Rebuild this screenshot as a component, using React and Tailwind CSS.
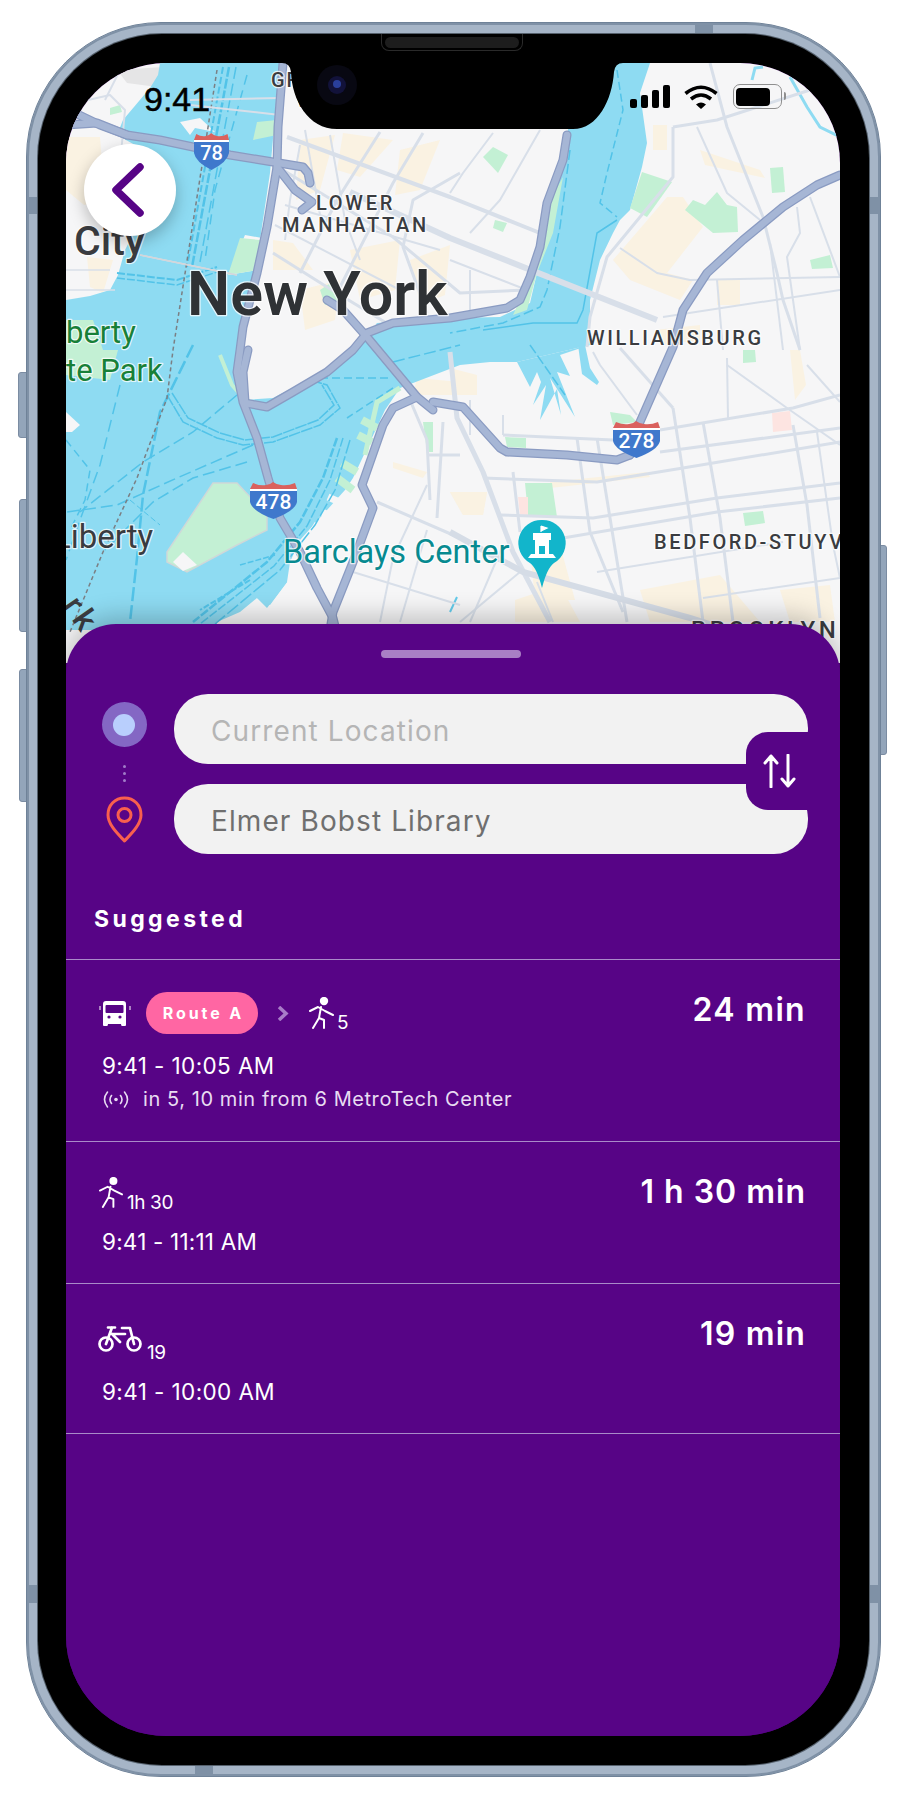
import React from "react";

// map data, in page pixels (the svg viewBox starts at the screen's top-left)
const TAN = [
  "66,137 100,137 105,200 84,205 66,190", "87,257 113,260 103,293 90,287",
  "343,133 393,140 360,177 337,170", "273,240 293,243 313,270 273,270", "437,203 460,197 460,233 440,240",
  "463,140 487,140 483,167 467,160", "507,140 527,133 520,153 510,153", "653,125 667,125 667,150 653,150",
  "613,260 650,217 667,197 683,197 703,227 667,273 693,280 680,300 630,280", "717,280 740,280 740,305 717,305",
  "267,368 293,348 307,365 277,382", "417,378 460,382 460,395 413,395", "450,368 477,375 477,395 460,395",
  "393,462 427,472 423,478 393,468", "450,492 487,492 483,515 463,515", "550,482 647,472 650,477 550,488",
  "700,150 760,170 765,178 705,165", "350,250 400,240 395,290 360,300", "300,290 340,280 335,320 305,330",
  "655,330 700,325 700,340 660,345", "515,600 560,585 580,622 515,622", "640,590 720,575 760,622 650,622",
  "780,590 830,585 835,622 790,622", "790,350 800,350 806,385 795,400", "300,140 335,135 320,190 296,200",
  "410,260 450,245 445,295 420,305", "400,150 440,140 420,190 395,195", "530,550 560,545 575,600 535,600",
];
const GREEN = [
  "257,122 277,120 277,135 253,140", "240,238 260,240 257,270 228,275", "483,157 493,147 508,155 498,173",
  "495,220 507,223 503,232 493,228", "630,208 642,172 672,182 647,217",
  "685,210 693,200 705,205 717,192 727,205 737,207 738,232 713,233", "770,168 783,167 785,192 772,193",
  "810,260 830,255 833,268 812,269", "550,200 563,177 553,233 537,273 527,310 513,315 520,300 535,270",
  "610,412 630,415 637,422 613,425", "743,350 755,350 756,362 743,363", "505,437 526,438 526,448 507,447",
  "525,483 552,483 557,517 528,515", "743,513 763,511 765,523 745,526", "423,422 433,422 433,452 427,452",
  "66,320 93,320 103,350 66,350", "110,108 120,105 122,112 110,115", "66,350 118,350 110,380 66,375",
  "320,290 335,280 345,300 325,305",
];
const MINOR = [
  ["287,137 450,197 540,233", 4], ["350,192 450,238 657,320", 6], ["283,170 393,237 460,293 527,290", 3],
  ["423,133 393,183 337,293", 3], ["380,132 337,200 300,273", 3], ["460,173 413,200 403,247 427,313", 3],
  ["273,253 327,287 393,327", 3], ["450,260 527,290", 2], ["470,270 470,310", 2], ["540,130 500,200 470,233", 2],
  ["493,133 463,173 450,193", 2], ["673,127 717,120 810,90", 3], ["673,127 673,177 607,257 590,317 587,347", 3],
  ["710,63 727,127 763,217 777,273 783,300 800,350", 3], ["697,127 727,193 760,220", 2],
  ["620,248 657,273 690,280 840,277", 2], ["797,207 800,233 787,257 800,350", 2], ["663,317 840,290", 2],
  ["770,243 783,350", 2], ["810,197 840,277", 2], ["717,280 723,350", 2], ["300,145 290,200 285,240", 2],
  ["330,135 345,220 360,260", 2], ["285,205 440,250", 2], ["275,225 400,290", 2], ["305,130 320,215", 2],
  ["503,435 613,440", 3], ["483,478 597,482 683,468 840,442", 3], ["660,430 793,408 840,395", 3], ["660,452 840,428", 3],
  ["500,515 593,518 717,498 840,483", 3], ["563,538 717,512 840,498", 3], ["597,572 783,542", 2], ["703,598 840,578", 2],
  ["577,438 590,532 623,612", 3], ["597,438 610,518 627,622", 3], ["673,408 690,518 703,622", 3],
  ["703,422 720,518 733,622", 3], ["793,425 807,505 820,618", 3], ["817,432 833,545 840,578", 2], ["620,348 673,408", 3],
  ["727,365 787,408 840,445", 2], ["727,358 728,418", 2], ["593,352 600,365 637,415", 2], ["807,365 840,402", 2],
  ["450,352 457,418 483,472 513,552 550,622", 5], ["513,472 520,532", 3], ["503,545 470,622", 2], ["537,582 553,622", 2],
  ["377,502 460,538", 3], ["353,572 460,605", 2], ["443,422 437,518", 3], ["427,455 460,455", 3], ["427,485 393,558 380,622", 2],
  ["410,400 427,440 430,500", 3], ["470,435 470,400", 2], ["503,435 503,415", 2], ["520,572 460,622", 2],
  ["427,530 400,622", 2], ["66,105 110,95 125,110 120,165", 2], ["120,70 105,100", 2], ["66,290 115,290", 1.5],
  ["66,270 110,270", 1.5], ["140,255 237,275", 1.5], ["190,100 280,98", 2], ["190,105 280,115", 2],
];
const HIGHWAYS = [
  "75,113 100,125 127,135", "66,125 97,123 127,135 160,140 193,147 230,155 273,162 303,167 308,173 310,183",
  "277,167 295,190 312,202 302,210",
  "283,63 278,127 277,167 267,227 257,273 243,327 240,350 237,372 243,402 257,438 268,478 280,518 300,552 317,588 333,618 336,630",
  "248,350 243,372 245,402", "245,403 267,407 293,392 327,372 353,350 367,333 393,323 450,318 507,308 520,300 530,277 540,247 547,203 563,160 567,135",
  "327,300 343,310 367,337 417,397 433,410", "417,397 393,408 383,425 362,485 373,508 353,562 333,612 330,630",
  "433,402 463,407 500,448 507,452 567,455 617,460 630,455", "630,455 640,422 673,347 683,310 707,273 743,240 783,207 817,185 840,175",
];
const FERRIES = [
  ["223,67 187,267", 2, "7 3"], ["229,67 192,267", 2.5, "10 2"], ["236,67 200,262", 1.5, "12 5"], ["247,75 215,190 205,260", 1.5, "10 6"],
  ["117,273 177,280 217,267", 2, "8 2"], ["117,278 177,285 217,272", 1.5, "8 2"],
  ["167,395 183,422 217,438 243,445 273,442 320,425 340,408 327,385 317,382", 1.5, "12 1"],
  ["172,393 188,418 220,433 245,440 273,437 318,420 334,405 322,385", 1.5, "12 1"],
  ["120,385 100,465 80,520 66,560", 1.5, "12 6"], ["193,345 160,412 143,495 137,558 130,622", 2.5, "14 4"],
  ["237,395 193,432 143,462 80,512", 1.5, "12 5"], ["253,445 177,478 117,505 67,512", 1.5, "12 5"],
  ["247,462 193,478 153,502 105,550", 1.5, "12 5"], ["66,440 90,470 85,500 70,530", 1.5, "8 5"],
  ["337,438 323,478 300,522 267,562 193,622", 2.5, "9 2"], ["343,438 330,480 307,526 274,566 200,624", 1.5, "9 2"],
  ["350,440 335,490 315,525 280,570 215,624", 1.5, "14 3"],
  ["617,70 623,110 607,173 600,203 617,217", 1.5, "8 4"], ["570,150 560,227 547,290 540,307 503,323 450,333", 1.5, "10 4"],
  ["320,378 390,378", 1.5, "8 4"], ["393,388 347,418", 1.5, "8 4"], ["393,362 460,345", 1.5, "12 4"],
  ["530,345 565,395", 1.5, "10 3"], ["130,500 160,525", 1, "6 3"], ["250,580 200,610", 2, "6 2"], ["240,565 275,555", 1.5, "6 2"],
];

function Shield({ x, y, w, label, size }) {
  const s = w / 47;
  return (
    <g>
      <g transform={`translate(${x} ${y}) scale(${s} 1)`}>
        <path d="M0 7 L3 1 Q10 4 16 3 Q20 3 23 0 Q27 3 31 3 Q38 4 45 1 L47 7Z" fill="#da615d" />
        <path d="M0 7H47V9H0Z" fill="#fff" />
        <path d="M0 9H47V20Q45 29 23.5 37Q2 29 0 20Z" fill="#3f78cc" />
      </g>
      <text x={x + w / 2} y={y + 27} textAnchor="middle" fontFamily="Roboto, sans-serif" fontWeight="500" fontSize={size} fill="#fff">{label}</text>
    </g>
  );
}

function Label({ x, y, size, fill = "#3a3c40", weight = 500, spacing = 0, children }) {
  return (
    <text x={x} y={y} fontFamily="Roboto, sans-serif" fontSize={size} fontWeight={weight} letterSpacing={spacing} fill={fill}
      stroke="#fff" strokeOpacity="0.75" strokeWidth="2.5" paintOrder="stroke" strokeLinejoin="round">{children}</text>
  );
}

function MapArt() {
  return (
    <svg viewBox="66 63 774 600" className="block h-[600px] w-[774px]">
      <rect x="66" y="63" width="774" height="600" fill="#f6f6f7" />
      {TAN.map((p) => <polygon key={p} points={p} fill="#faf2e2" />)}
      <polygon points="117,70 163,67 157,87 127,83" fill="#e5e5e6" />

      {/* water, with Manhattan laid over it */}
      <polygon fill="#8edbf2" points="160,63 158,75 150,88 123,120 117,135 135,145 135,230 125,250 118,275 110,290 90,296 66,300 66,630 217,630 217,622 240,612 257,598 270,605 287,582 290,562 300,540 345,490 353,478 385,410 400,388 460,365 490,362 517,362 590,345 590,300 600,260 613,233 620,220 630,210 642,167 647,143 640,93 650,63" />
      <polygon fill="#f6f6f7" points="280,63 277,93 270,173 257,260 247,313 237,350 235,372 245,400 273,398 323,372 360,345 377,323 450,318 500,317 530,303 540,260 547,193 567,140 575,63" />
      {TAN.slice(2, 4).concat(TAN.slice(17, 19), TAN.slice(24, 27), TAN.slice(14, 15)).map((p) => <polygon key={p} points={p} fill="#faf2e2" />)}
      <polygon fill="#8edbf2" points="517,362 530,387 537,372 541,382 533,405 546,385 540,420 557,389 561,415 550,378 575,417 557,372 570,376 560,355 590,345" />
      <polygon fill="#8edbf2" points="578,345 585,345 590,368 599,382 597,385 582,374" />
      <polygon fill="#f6f6f7" points="180,122 200,118 215,132 195,128 190,135" />
      <polygon fill="#f6f6f7" points="245,235 262,238 258,270 228,275" />
      <polyline points="752,80 755,68 763,67" fill="none" stroke="#8edbf2" strokeWidth="3" />
      <polyline points="790,77 807,107 820,127 840,137" fill="none" stroke="#8edbf2" strokeWidth="3" />
      <polygon fill="#8edbf2" points="270,570 287,582 267,608 257,598 275,585" />
      <line x1="457" y1="597" x2="450" y2="612" stroke="#64cbea" strokeWidth="2" />

      {/* piers */}
      {[[328, 497, 358, 510], [322, 512, 338, 520], [313, 525, 330, 535], [305, 540, 320, 545]].map(([a, b, c, d]) => (
        <line key={a} x1={a} y1={b} x2={c} y2={d} stroke="#f6f6f7" strokeWidth="7" />
      ))}
      {[[362, 420, 377, 428], [358, 435, 372, 442], [342, 463, 357, 472], [337, 478, 353, 490]].map(([a, b, c, d]) => (
        <line key={a} x1={a} y1={b} x2={c} y2={d} stroke="#c3f0d4" strokeWidth="8" />
      ))}
      <polyline points="400,388 377,402 365,455" fill="none" stroke="#c3f0d4" strokeWidth="5" />
      <polyline points="220,355 232,385 247,402" fill="none" stroke="#c3f0d4" strokeWidth="4" />

      {GREEN.map((p) => <polygon key={p} points={p} fill="#c3f0d4" />)}
      <polygon points="772,413 790,411 792,430 773,432" fill="#fde4e1" />
      <polygon points="518,497 528,497 528,515 520,515" fill="#fde4e1" />

      {/* Governors Island */}
      <polygon points="213,483 237,483 267,515 267,530 237,545 187,572 167,562 167,552" fill="#c3f0d4" stroke="#cfd8d8" strokeWidth="1.5" />
      <polygon points="183,552 197,565 183,571 173,562" fill="#f6f6f7" />
      <polygon points="66,412 80,425 72,432 66,432" fill="#f6f6f7" />

      {FERRIES.map(([p, w, d]) => <polyline key={p} points={p} fill="none" stroke="#52c3e8" strokeWidth={w} strokeDasharray={d} />)}
      <polyline points="617,220 597,233 583,310 577,323 533,323 483,330" fill="none" stroke="#52c3e8" strokeWidth="1.5" />
      <polyline points="217,70 173,350 167,398 137,478 103,552 70,632" fill="none" stroke="#7b7f84" strokeWidth="1.5" strokeDasharray="4 3" />

      {MINOR.map(([p, w]) => <polyline key={p} points={p} fill="none" stroke="#d8dfe9" strokeWidth={w} strokeLinejoin="round" />)}
      <polyline points="450,532 523,572 690,618 760,640" fill="none" stroke="#d5dce6" strokeWidth="6" />
      <line x1="140" y1="255" x2="237" y2="275" stroke="#d3d6da" strokeWidth="1.5" />

      {HIGHWAYS.map((p) => <polyline key={p + "o"} points={p} fill="none" stroke="#8a9bc2" strokeWidth="9" strokeLinejoin="round" strokeLinecap="round" />)}
      {HIGHWAYS.map((p) => <polyline key={p} points={p} fill="none" stroke="#a6b6d5" strokeWidth="6.5" strokeLinejoin="round" strokeLinecap="round" />)}

      <Shield x={194} y={133} w={35} label="78" size={20} />
      <Shield x={250} y={482} w={47} label="478" size={21} />
      <Shield x={613} y={421} w={47} label="278" size={21} />

      <Label x={74} y={255} size={41}>City</Label>
      <Label x={187} y={315} size={61} weight={600} fill="#2f3235">New York</Label>
      <Label x={271} y={87} size={20} spacing={2}>GR</Label>
      <Label x={295} y={107} size={20}>V</Label>
      <Label x={316} y={210} size={20} spacing={2.7}>LOWER</Label>
      <Label x={282} y={232} size={20} spacing={2.7}>MANHATTAN</Label>
      <Label x={587} y={345} size={20} spacing={2.6}>WILLIAMSBURG</Label>
      <Label x={654} y={549} size={20} spacing={2.6}>BEDFORD-STUYV</Label>
      <Label x={691} y={638} size={24} spacing={3.5}>BROOKLYN</Label>
      <Label x={66} y={343} size={31} fill="#188038" weight={400}>berty</Label>
      <Label x={66} y={381} size={31} fill="#188038" weight={400}>te Park</Label>
      <Label x={53} y={548} size={33} weight={400}>Liberty</Label>
      <Label x={283} y={563} size={32.5} fill="#078a90" weight={400}>Barclays Center</Label>
      <text x="62" y="606" transform="rotate(55 62 606)" fontFamily="Roboto, sans-serif" fontSize="32" fontWeight="500" letterSpacing="5" fill="#3a3c40">rk</text>

      {/* stadium pin */}
      <path d="M542 520a23 23 0 0 1 12 43q-7 5-12 25q-5-20-12-25a23 23 0 0 1 12-43Z" fill="#12b5cb" />
      <path d="M541 526v6M541 526l6 2-6 3" stroke="#fff" strokeWidth="1.2" fill="#fff" />
      <path d="M533 533h18v7h-2v14h4l3 4h-28l3-4h4v-14h-2Z" fill="#fff" />
      <rect x="539" y="546" width="6" height="8" fill="#12b5cb" />
    </svg>
  );
}

function Walker({ className }) {
  return (
    <svg viewBox="0 0 25 32" className={className} fill="none" stroke="#fff" strokeWidth="2" strokeLinecap="round" strokeLinejoin="round">
      <circle cx="15" cy="4" r="4.2" fill="#fff" stroke="none" />
      <path d="M1 14l8-4 7 4 8 4M12 10l-2 11-6 10M10 21l5 2v8" />
    </svg>
  );
}

function Bike({ className }) {
  return (
    <svg viewBox="0 0 44 26" className={className} fill="none" stroke="#fff" strokeWidth="2.7" strokeLinecap="round" strokeLinejoin="round">
      <circle cx="8" cy="18" r="6.5" />
      <circle cx="36" cy="18" r="6.5" />
      <path d="M10 1.5h7M14 1.5L8 18M14 8l8 8M14 8h13M24 2h8l4 16" />
    </svg>
  );
}

function Bus({ className }) {
  return (
    <svg viewBox="0 0 32 25" className={className}>
      <path d="M7 0h17q3 0 3 3v21q0 1-1 1h-3q-1 0-1-2H9q0 2-1 2H5q-1 0-1-1V3q0-3 3-3Z" fill="#fff" />
      <rect x="6.5" y="4" width="18" height="8" rx="1" fill="#570486" />
      <circle cx="10" cy="16" r="1.6" fill="#570486" />
      <circle cx="21" cy="16" r="1.6" fill="#570486" />
      <path d="M0.5 5h1v4h-1ZM30.5 5h1v4h-1Z" fill="#fff" />
    </svg>
  );
}

function Live({ className }) {
  return (
    <svg viewBox="0 0 26 17" className={className} fill="none" stroke="#e8dcf2" strokeWidth="1.6" strokeLinecap="round">
      <circle cx="13" cy="8.5" r="1.8" fill="#e8dcf2" stroke="none" />
      <path d="M8.5 4.5q-3 4 0 8M17.5 4.5q3 4 0 8M4.5 1q-6 7.5 0 15M21.5 1q6 7.5 0 15" />
    </svg>
  );
}

function StatusBar() {
  return (
    <div className="absolute inset-x-0 top-0 z-10 h-[66px]">
      <span className="absolute left-[78px] top-[17px] font-['Liberation_Sans',sans-serif] text-[34px] leading-[38px] text-black [-webkit-text-stroke:0.5px_black]">9:41</span>
      <div className="absolute left-[564px] top-[22px] flex items-end gap-[4px]">
        <div className="h-[9px] w-[7px] rounded-[2px] bg-black" />
        <div className="h-[13px] w-[7px] rounded-[2px] bg-black" />
        <div className="h-[18px] w-[7px] rounded-[2px] bg-black" />
        <div className="h-[23px] w-[7px] rounded-[2px] bg-black" />
      </div>
      <svg viewBox="0 0 34 24" className="absolute left-[618px] top-[22px] h-[24px] w-[34px]" fill="none" stroke="#000" strokeWidth="3.6">
        <path d="M1.5 8.5Q17-4 32.5 8.5M7 14Q17 6 27 14" />
        <path d="M12 19.5Q17 15.5 22 19.5L17 24Z" fill="#000" stroke="none" />
      </svg>
      <div className="absolute left-[667px] top-[21px] flex h-[25px] w-[49px] items-center rounded-[7px] border-[1.5px] border-[#8f8f8f] pl-[2px]">
        <div className="h-[18px] w-[34px] rounded-[4px] bg-black" />
      </div>
      <div className="absolute left-[718px] top-[29px] h-[8px] w-[2px] rounded-r-full bg-[#8f8f8f]" />
    </div>
  );
}

function Notch() {
  return (
    <svg viewBox="282 63 341 66" className="absolute left-[216px] top-0 z-10 h-[66px] w-[341px]">
      <path d="M282 63Q290 63 291 72C292 100 308 129 337 129H573C598 129 612 100 614 72Q615 63 623 63Z" fill="#000" />
      <circle cx="337" cy="85" r="20" fill="#080812" />
      <circle cx="337" cy="85" r="9" fill="#12123a" />
      <circle cx="337" cy="84" r="4" fill="#2a3f9c" />
    </svg>
  );
}

export default function App() {
  return (
    <div className="relative h-[1800px] w-[906px] overflow-hidden bg-white pl-[26px] pt-[22px] font-[Inter,sans-serif]">
      {/* side buttons */}
      <div className="absolute left-[18px] top-[372px] h-[66px] w-[9px] rounded-l-[3px] border border-[#7b8ca2] bg-[#93a5ba]" />
      <div className="absolute left-[19px] top-[499px] h-[133px] w-[8px] rounded-l-[3px] border border-[#7b8ca2] bg-[#93a5ba]" />
      <div className="absolute left-[19px] top-[669px] h-[133px] w-[8px] rounded-l-[3px] border border-[#7b8ca2] bg-[#93a5ba]" />
      <div className="absolute left-[880px] top-[545px] h-[210px] w-[7px] rounded-r-[3px] border border-[#7b8ca2] bg-[#93a5ba]" />

      {/* phone frame */}
      <div className="relative h-[1755px] w-[855px] rounded-[135px] border border-[#6f8298] bg-[#a6b5c7] p-[11px] shadow-[inset_0_0_0_2px_#7f91a6]">
        <div className="absolute left-[668px] top-0 h-[12px] w-[18px] bg-[#7f91a6]" />
        <div className="absolute bottom-0 left-[168px] h-[12px] w-[18px] bg-[#7f91a6]" />
        <div className="absolute left-0 top-[174px] h-[17px] w-[12px] bg-[#7f91a6]" />
        <div className="absolute right-0 top-[174px] h-[17px] w-[12px] bg-[#7f91a6]" />
        <div className="absolute left-0 top-[1562px] h-[18px] w-[12px] bg-[#7f91a6]" />
        <div className="absolute right-0 top-[1562px] h-[18px] w-[12px] bg-[#7f91a6]" />

        <div className="relative h-full w-full rounded-[124px] bg-black pb-[29px] pl-[28px] pr-[29px] pt-[29px] ring-1 ring-[#55606c]">
          {/* speaker */}
          <div className="absolute left-[343px] top-0 flex h-[17px] w-[142px] items-start justify-center rounded-b-[8px] border border-t-0 border-[#2a2a2a]">
            <div className="mt-[3px] h-[11px] w-[134px] rounded-full bg-[#1d1d1d]" />
          </div>

          {/* screen */}
          <div className="relative flex h-full flex-col overflow-hidden rounded-[100px] bg-[#570486]">
            <StatusBar />
            <Notch />
            <MapArt />

            {/* back button */}
            <div className="absolute left-[18px] top-[81px] z-10 flex h-[92px] w-[92px] items-center justify-center rounded-full bg-white shadow-[0_6px_16px_rgba(0,0,0,0.25)]">
              <svg viewBox="0 0 32 54" className="mr-[5px] h-[54px] w-[32px]" fill="none" stroke="#570486" strokeWidth="7.5" strokeLinecap="round" strokeLinejoin="round">
                <path d="M28 4L4 27l24 23" />
              </svg>
            </div>

            {/* bottom sheet */}
            <div className="relative z-20 mt-[-39px] flex flex-1 flex-col rounded-t-[50px] bg-[#570486] shadow-[0_-8px_24px_rgba(0,0,0,0.22)]">
              <div className="ml-[315px] mt-[26px] h-[8px] w-[140px] rounded-full bg-[#a97fc5]" />

              <div className="mt-[36px] flex pl-[34px] pr-[32px]">
                <div className="flex w-[48px] flex-col items-center pt-[8px]">
                  <div className="flex h-[45px] w-[45px] items-center justify-center rounded-full bg-[#8467c4]">
                    <div className="h-[22px] w-[22px] rounded-full bg-[#b9cffd]" />
                  </div>
                  <div className="mt-[18px] flex flex-col gap-[4px]">
                    <div className="h-[3px] w-[3px] rounded-full bg-[#a07cc8]" />
                    <div className="h-[3px] w-[3px] rounded-full bg-[#a07cc8]" />
                    <div className="h-[3px] w-[3px] rounded-full bg-[#a07cc8]" />
                  </div>
                  <svg viewBox="0 0 37 47" className="mt-[14px] h-[47px] w-[37px]" fill="none" stroke="#f9604e" strokeWidth="3">
                    <path d="M18.5 2C9 2 2 9 2 19C2 29 13 39 18.5 45C24 39 35 29 35 19C35 9 28 2 18.5 2Z" strokeLinejoin="round" />
                    <circle cx="18.5" cy="19" r="6.5" />
                  </svg>
                </div>

                <div className="relative ml-[26px] flex flex-1 flex-col gap-[20px]">
                  <div className="flex h-[70px] items-center rounded-[34px] bg-[#f2f2f2] pl-[37px] pt-[4px] text-[28px] tracking-[1.1px] text-[#b5b5b5]">Current Location</div>
                  <div className="flex h-[70px] items-center rounded-[34px] bg-[#f2f2f2] pl-[37px] pt-[4px] text-[28px] tracking-[1.1px] text-[#6f6f6f]">Elmer Bobst Library</div>
                  <div className="absolute right-0 top-[38px] flex h-[78px] w-[62px] items-center justify-center rounded-l-[22px] bg-[#570486]">
                    <svg viewBox="0 0 33 34" className="ml-[5px] h-[34px] w-[33px]" fill="none" stroke="#fff" strokeWidth="3" strokeLinecap="round" strokeLinejoin="round">
                      <path d="M8 33V2M2 9l6-7 6 7M25 1v31M19 25l6 7 6-7" />
                    </svg>
                  </div>
                </div>
              </div>

              <div className="ml-[28px] mt-[52px] text-[23px] font-bold leading-[26px] tracking-[3.4px] text-white">Suggested</div>

              {/* routes */}
              <div className="mt-[27px] flex h-[182px] justify-between border-t border-[#a98bc9] pl-[33px] pr-[34px] pt-[30px] text-white">
                <div className="pt-[2px]">
                  <div className="flex h-[42px] items-center">
                    <Bus className="h-[25px] w-[32px]" />
                    <div className="ml-[15px] flex h-[42px] w-[112px] items-center justify-center rounded-full bg-[#ff66a3] pl-[3px] text-[16px] font-bold tracking-[2.9px] text-white">Route A</div>
                    <svg viewBox="0 0 12 15" className="ml-[19px] h-[15px] w-[12px]" fill="none" stroke="#a87cc8" strokeWidth="3.5">
                      <path d="M2 1l7 6.5-7 6.5" />
                    </svg>
                    <Walker className="ml-[20px] h-[32px] w-[25px]" />
                    <span className="ml-[3px] mt-[20px] text-[19px] leading-[20px]">5</span>
                  </div>
                  <div className="ml-[3px] mt-[19px] text-[22.5px] leading-[26px] tracking-[0.4px]">9:41 - 10:05 AM</div>
                  <div className="ml-[4px] mt-[8px] flex items-center text-[20px] leading-[24px] tracking-[0.57px] text-[#e8dcf2]">
                    <Live className="h-[17px] w-[26px]" />
                    <span className="ml-[14px]">in 5, 10 min from 6 MetroTech Center</span>
                  </div>
                </div>
                <div className="text-[32px] font-semibold leading-[40px] tracking-[1.3px]">24 min</div>
              </div>

              <div className="flex h-[142px] justify-between border-t border-[#a98bc9] pl-[33px] pr-[34px] pt-[30px] text-white">
                <div className="pt-[5px]">
                  <div className="flex h-[33px] items-start">
                    <Walker className="h-[31px] w-[24px]" />
                    <span className="ml-[4px] mt-[16px] text-[19px] leading-[20px] tracking-[-0.4px]">1h 30</span>
                  </div>
                  <div className="ml-[3px] mt-[19px] text-[22.5px] leading-[26px] tracking-[0.2px]">9:41 - 11:11 AM</div>
                </div>
                <div className="text-[32px] font-semibold leading-[40px] tracking-[1px]">1 h 30 min</div>
              </div>

              <div className="flex h-[151px] justify-between border-y border-[#a98bc9] pl-[32px] pr-[34px] pt-[30px] text-white">
                <div className="pt-[12px]">
                  <div className="flex h-[34px] items-start">
                    <Bike className="h-[26px] w-[44px]" />
                    <span className="ml-[5px] mt-[17px] text-[19px] leading-[20px] tracking-[-0.4px]">19</span>
                  </div>
                  <div className="ml-[4px] mt-[19px] text-[22.5px] leading-[26px] tracking-[0.4px]">9:41 - 10:00 AM</div>
                </div>
                <div className="text-[32px] font-semibold leading-[40px] tracking-[1.2px]">19 min</div>
              </div>
            </div>
          </div>
        </div>
      </div>
    </div>
  );
}
